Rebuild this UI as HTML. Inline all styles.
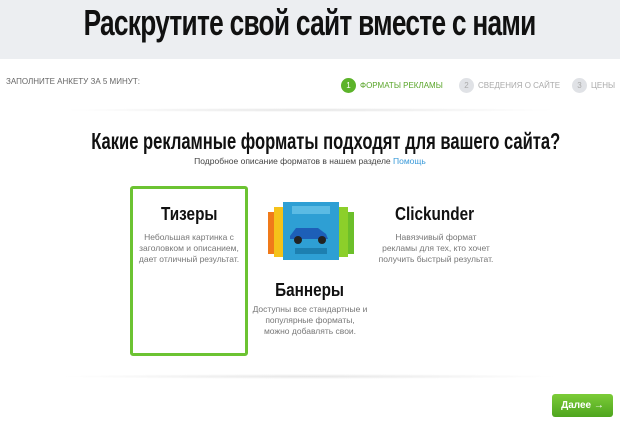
<!DOCTYPE html>
<html><head><meta charset="utf-8"><style>
*{margin:0;padding:0;box-sizing:border-box}
body{width:620px;height:425px;background:#fff;font-family:"Liberation Sans",sans-serif;position:relative;overflow:hidden}
.top{position:absolute;left:0;top:0;width:620px;height:59px;background:#eceef1}
.title{position:absolute;left:0;width:620px;top:2px;text-align:center;font-size:36px;font-weight:bold;color:#111;letter-spacing:-1px}
.title span{display:inline-block;transform:scaleX(.73);white-space:nowrap}
.nar{display:inline-block;transform:scaleX(.72);white-space:nowrap}
.nar2{display:inline-block;transform:scaleX(.85);white-space:nowrap}
.fill{position:absolute;left:6px;top:77px;font-size:8px;color:#666}
.step{position:absolute;top:77px;font-size:8px;color:#aaa;display:flex;align-items:center}
.step i{display:inline-block;width:15px;height:15px;border-radius:50%;background:#e0e2e6;color:#aaa;font-style:normal;text-align:center;line-height:15px;font-size:8px;margin-right:4px}
.step.a{color:#5aa52a}.step.a i{background:#5cb32a;color:#fff}
.sh{position:absolute;left:60px;top:108px;width:500px;height:4px;background:radial-gradient(ellipse at center,#e4e4e4,rgba(255,255,255,0) 70%)}
.h2{position:absolute;left:0;width:620px;top:128px;text-align:center;font-size:23px;font-weight:bold;color:#111}
.sub{position:absolute;left:0;width:620px;top:156px;text-align:center;font-size:8.5px;color:#444}
.sub b{font-weight:normal;color:#3a9ad9}
.box{position:absolute;left:130px;top:186px;width:118px;height:170px;border:3px solid #6cc332;border-radius:3px}
.ct{position:absolute;text-align:center;font-weight:bold;font-size:18px;color:#111}
.cd{position:absolute;text-align:center;font-size:8.5px;color:#777;line-height:11px}
.sh2{position:absolute;left:60px;top:374px;width:500px;height:5px;background:radial-gradient(ellipse at center,#e6e6e6,rgba(255,255,255,0) 70%)}
.btn{position:absolute;left:552px;top:394px;width:61px;height:23px;background:linear-gradient(#7ccc38,#4ea51e);border-radius:3px;color:#fff;font-size:10px;font-weight:bold;text-align:center;line-height:23px}
</style></head><body>
<div class="top"></div>
<div class="title"><span>Раскрутите свой сайт вместе с нами</span></div>
<div class="fill">ЗАПОЛНИТЕ АНКЕТУ ЗА 5 МИНУТ:</div>
<div class="step a" style="left:341px;top:78px"><i>1</i>ФОРМАТЫ РЕКЛАМЫ</div>
<div class="step" style="left:459px;top:78px"><i>2</i>СВЕДЕНИЯ О САЙТЕ</div>
<div class="step" style="left:572px;top:78px"><i>3</i>ЦЕНЫ</div>
<div class="sh"></div>
<div class="h2"><span class="nar">Какие рекламные форматы подходят для вашего сайта?</span></div>
<div class="sub">Подробное описание форматов в нашем разделе <b>Помощь</b></div>
<div class="box"></div>
<div class="ct" style="left:130px;width:118px;top:204px"><span class="nar2">Тизеры</span></div>
<div class="cd" style="left:134px;width:110px;top:232px">Небольшая картинка с заголовком и описанием, дает отличный результат.</div>
<svg style="position:absolute;left:266px;top:200px" width="90" height="62">
<rect x="2" y="12" width="12" height="42" fill="#f07a1a"/>
<rect x="8" y="7" width="12" height="50" fill="#f5c21a"/>
<rect x="76" y="12" width="12" height="42" fill="#6cbf2a"/>
<rect x="70" y="7" width="12" height="50" fill="#8ccf2a"/>
<rect x="17" y="2" width="56" height="58" fill="#2e9fd4"/>
<path d="M24 36 l6-8 h22 l8 6 l2 5 h-38z" fill="#1d5fb8"/>
<circle cx="32" cy="40" r="4" fill="#222"/><circle cx="56" cy="40" r="4" fill="#222"/>
<rect x="29" y="48" width="32" height="6" fill="#1d7fb0"/>
<rect x="26" y="6" width="38" height="8" fill="#5bbbe4"/>
</svg>
<div class="ct" style="left:360px;width:150px;top:204px"><span class="nar2">Clickunder</span></div>
<div class="cd" style="left:378px;width:116px;top:232px">Навязчивый формат рекламы для тех, кто хочет получить быстрый результат.</div>
<div class="ct" style="left:240px;width:140px;top:280px"><span class="nar2">Баннеры</span></div>
<div class="cd" style="left:252px;width:116px;top:304px">Доступны все стандартные и популярные форматы, можно добавлять свои.</div>
<div class="sh2"></div>
<div class="btn">Далее →</div>
</body></html>
